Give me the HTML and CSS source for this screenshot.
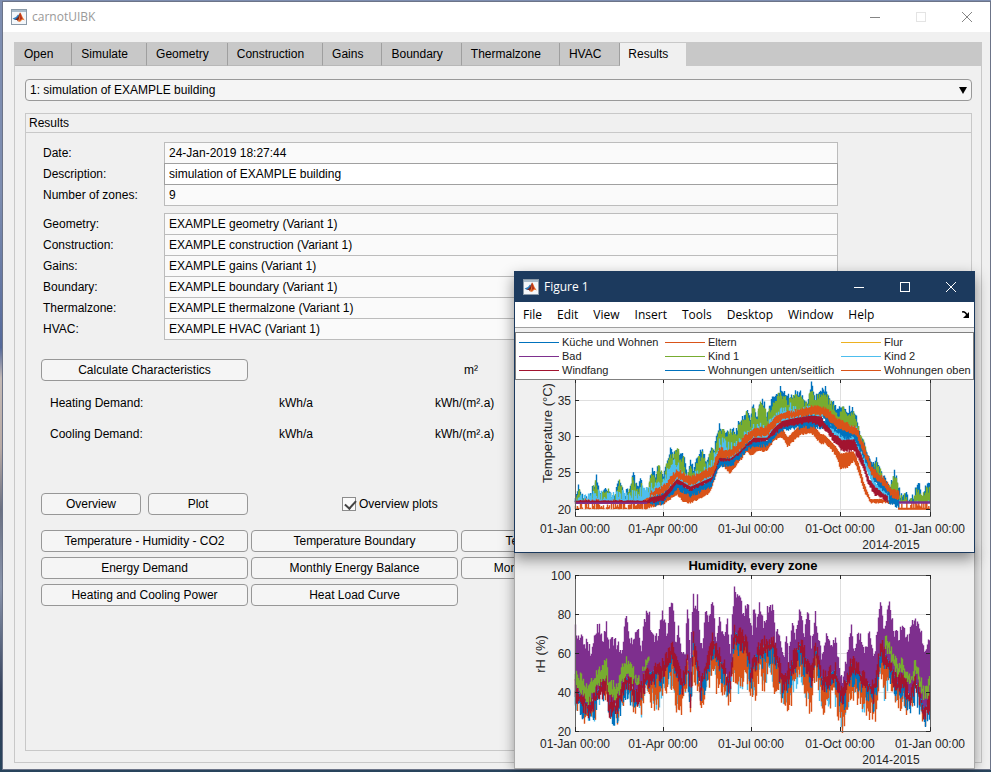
FILE: index.html
```html
<!DOCTYPE html>
<html lang="en">
<head>
<meta charset="utf-8">
<title>carnotUIBK</title>
<link rel="stylesheet" href="styles.css">
</head>
<body>
<svg class="defs" aria-hidden="true">
  <symbol id="app-icon" viewBox="0 0 16 16">
    <rect x=".5" y=".5" width="15" height="15" fill="#f4f7fa" stroke="#8b9aa8"/>
    <rect x="1" y="1" width="14" height="2" fill="#a9bccb"/>
    <path d="M1.500 9.500 5 8 7 5.500 8 6 6.500 10.500 4 11Z" fill="#2f7fc0"/>
    <path d="M4 11 7 8 9 3.500 9.500 7 7 12.500 6 11Z" fill="#7a2318"/>
    <path d="M9 3.500C10.500 4.500 11.500 9 14 11.500 12 10.500 11 10.500 9.500 12.500 9 13 7.500 13 7 12 8.500 9.500 8.500 6 9 3.500Z" fill="#e8702a"/>
    <path d="M9 3.500C9.800 5 10.500 8 11.500 10 10 9.500 9 11 8.500 12 9.500 9 9 6 9 3.500Z" fill="#b5301c"/>
  </symbol>
  <symbol id="min" viewBox="0 0 12 12"><path d="M1 6.500H11" stroke="currentColor" fill="none"/></symbol>
  <symbol id="max" viewBox="0 0 12 12"><rect x="1.500" y="1.500" width="9" height="9" stroke="currentColor" fill="none"/></symbol>
  <symbol id="close" viewBox="0 0 12 12"><path d="M1 1 11 11M11 1 1 11" stroke="currentColor" fill="none"/></symbol>
</svg>

<main class="window">
  <header class="titlebar">
    <svg class="app-icon"><use href="#app-icon"/></svg>
    <h1 class="window-title">carnotUIBK</h1>
    <div class="controls">
      <button aria-label="Minimize"><svg><use href="#min"/></svg></button>
      <button aria-label="Maximize" disabled><svg><use href="#max"/></svg></button>
      <button aria-label="Close"><svg><use href="#close"/></svg></button>
    </div>
  </header>
  <div class="tabbox">
    <div class="tabs" role="tablist">
      <button role="tab">Open</button><button role="tab">Simulate</button><button role="tab">Geometry</button><button role="tab">Construction</button><button role="tab">Gains</button><button role="tab">Boundary</button><button role="tab">Thermalzone</button><button role="tab">HVAC</button><button role="tab" aria-selected="true">Results</button>
    </div>
    <div class="page">
      <div class="picker">
        <select aria-label="Simulation"><option>1: simulation of EXAMPLE building</option></select>
        <svg class="arrow" viewBox="0 0 8 7"><path d="M0 0H8L4 7Z"/></svg>
      </div>
      <section class="panel">
        <h2>Results</h2>
        <div class="panel-body">
          <div class="fields">
            <label for="date">Date:</label><input id="date" readonly value="24-Jan-2019 18:27:44">
            <label for="desc">Description:</label><input id="desc" class="editable" value="simulation of EXAMPLE building">
            <label for="zones">Number of zones:</label><input id="zones" readonly value="9">
          </div>
          <div class="fields">
            <label for="geo">Geometry:</label><input id="geo" readonly value="EXAMPLE geometry (Variant 1)">
            <label for="con">Construction:</label><input id="con" readonly value="EXAMPLE construction (Variant 1)">
            <label for="gai">Gains:</label><input id="gai" readonly value="EXAMPLE gains (Variant 1)">
            <label for="bou">Boundary:</label><input id="bou" readonly value="EXAMPLE boundary (Variant 1)">
            <label for="the">Thermalzone:</label><input id="the" readonly value="EXAMPLE thermalzone (Variant 1)">
            <label for="hva">HVAC:</label><input id="hva" readonly value="EXAMPLE HVAC (Variant 1)">
          </div>
          <div class="demand">
            <button class="btn">Calculate Characteristics</button><span></span><span class="area">m²</span>
            <span class="name">Heating Demand:</span><span class="unit">kWh/a</span><span>kWh/(m².a)</span>
            <span class="name">Cooling Demand:</span><span class="unit">kWh/a</span><span>kWh/(m².a)</span>
          </div>
          <div class="overview">
            <button class="btn">Overview</button>
            <button class="btn">Plot</button>
            <label class="check"><input type="checkbox" checked>Overview plots</label>
          </div>
          <div class="plots">
            <button class="btn">Temperature - Humidity - CO2</button>
            <button class="btn">Temperature Boundary</button>
            <button class="btn">Temperature Surfaces</button>
            <button class="btn">Energy Demand</button>
            <button class="btn">Monthly Energy Balance</button>
            <button class="btn">Monthly Losses and Gains</button>
            <button class="btn">Heating and Cooling Power</button>
            <button class="btn">Heat Load Curve</button>
          </div>
        </div>
      </section>
    </div>
  </div>
</main>

<section class="figure figure-back" aria-label="Humidity figure">
  <svg class="chart" viewBox="0 0 459 215" id="humidity"></svg>
</section>

<section class="figure figure-front" aria-label="Figure 1">
  <header class="titlebar">
    <svg class="app-icon"><use href="#app-icon"/></svg>
    <h2 class="window-title">Figure 1</h2>
    <div class="controls">
      <button aria-label="Minimize"><svg><use href="#min"/></svg></button>
      <button aria-label="Maximize"><svg><use href="#max"/></svg></button>
      <button aria-label="Close"><svg><use href="#close"/></svg></button>
    </div>
  </header>
  <nav class="menu">
    <button>File</button><button>Edit</button><button>View</button><button>Insert</button><button>Tools</button><button>Desktop</button><button>Window</button><button>Help</button>
    <svg class="dock" viewBox="0 0 8 8"><path d="M0 1C3 0 4 2 5 4" fill="none" stroke="#000" stroke-width="1.500"/><path d="M7 1V7H1Z"/></svg>
  </nav>
  <ul class="legend">
    <li class="blue">Küche und Wohnen</li><li class="orange">Eltern</li><li class="yellow">Flur</li>
    <li class="purple">Bad</li><li class="green">Kind 1</li><li class="cyan">Kind 2</li>
    <li class="red">Windfang</li><li class="blue">Wohnungen unten/seitlich</li><li class="orange">Wohnungen oben</li>
  </ul>
  <svg class="chart" viewBox="0 0 459 172" id="temperature"></svg>
</section>
<script src="charts.js"></script>
</body>
</html>
```

FILE: styles.css
```css
* { box-sizing: border-box; }
body {
  margin: 0;
  height: 100vh;
  overflow: hidden;
  padding: 1px 0 2px 2px;
  background: linear-gradient(#7d8db0 0 25%, #54699a 45%, #c4bab6 49%, #b9aba6 58%, #6b7183 66%, #8994ab 76%, #33405a 90%, #28445c);
  font: 12px/14px "Liberation Sans", Arial, sans-serif;
  color: #000;
}
button, input, select { font: inherit; color: inherit; }
h1, h2, ul { margin: 0; padding: 0; font: inherit; }
.defs { position: absolute; width: 0; height: 0; }

.window {
  display: flex;
  flex-direction: column;
  height: 100%;
  background: #f0f0f0;
  border: 1px solid #6c7488;
}
.titlebar {
  display: flex;
  align-items: center;
  gap: 5px;
  height: 30px;
  padding-left: 8px;
  background: #fff;
  font-family: "Open Sans", "Noto Sans", sans-serif;
}
.app-icon { width: 16px; height: 16px; }
.window > .titlebar .window-title { color: #999; }
.controls { display: flex; margin-left: auto; }
.controls button {
  display: grid;
  place-items: center;
  width: 46px;
  height: 30px;
  padding: 0;
  border: 0;
  background: none;
  color: #858585;
}
.controls button:disabled { color: #e4e4e4; }
.controls svg { width: 12px; height: 12px; }

.tabbox {
  display: flex;
  flex-direction: column;
  flex: 1;
  margin: 10px 8px 6px 11px;
  border: 1px solid #c8c8c8;
}
.tabs { display: flex; height: 23px; background: #c8c8c8; }
.tabs button {
  padding: 0 18px 0 9px;
  border: 0;
  border-right: 1px solid #9f9f9f;
  border-bottom: 1px solid #b8b8b8;
  background: none;
}
.tabs [aria-selected="true"] { padding: 0 17px 0 8px; background: #f0f0f0; border-color: #f0f0f0; }
.page {
  display: flex;
  flex-direction: column;
  flex: 1;
  gap: 12px;
  padding: 13px 9px 11px 10px;
}
.picker { position: relative; display: flex; }
.picker select {
  appearance: none;
  width: 100%;
  height: 22px;
  padding: 0 4px;
  border: 1px solid #999;
  border-radius: 4px;
  background: #f5f5f5;
}
.arrow { position: absolute; right: 5px; top: 8px; width: 8px; height: 7px; }
.panel { flex: 1; border: 1px solid #c8c8c8; }
.panel h2 { height: 19px; padding: 2px 3px; border-bottom: 1px solid #c8c8c8; }
.panel-body { padding: 9px 15px; }
.fields {
  display: grid;
  grid-template-columns: 121px minmax(0, 674px);
  grid-auto-rows: 21px;
  align-items: center;
  margin: 0 0 8px 2px;
}
.fields input {
  width: 100%;
  height: 22px;
  margin: 0;
  padding: 0 4px;
  border: 1px solid #bcbcbc;
  border-radius: 0;
  background: #fafafa;
}
.fields .editable { position: relative; border-color: #a0a0a0; background: #fff; }
.btn {
  height: 22px;
  padding: 0;
  border: 1px solid #979797;
  border-radius: 4px;
  background: #f5f5f5;
}
.demand {
  display: grid;
  grid-template-columns: 207px 125px 100px;
  column-gap: 31px;
  grid-template-rows: 22px 43px 20px;
  align-items: center;
  padding-top: 12px;
}
.demand .name { padding-left: 9px; }
.demand .area { padding-left: 29px; }
.overview {
  display: grid;
  grid-template-columns: 100px 100px 1fr;
  gap: 7px;
  margin-top: 49px;
}
.check { display: flex; align-items: center; gap: 3px; padding-left: 87px; }
.check input {
  appearance: none;
  width: 14px;
  height: 14px;
  margin: 0;
  border: 1px solid #8c8c8c;
  background: #fafafa;
}
.check input:checked::after {
  content: "";
  display: block;
  width: 5px;
  height: 9px;
  margin: 0 0 0 4px;
  border: solid #444;
  border-width: 0 2px 2px 0;
  transform: rotate(42deg);
}
.plots {
  display: grid;
  grid-template-columns: repeat(3, 207px);
  gap: 5px 3px;
  margin-top: 15px;
}

.figure { position: absolute; left: 514px; width: 461px; border: 1px solid #1c3a5e; background: #f0f0f0; }
.figure-front { top: 271px; box-shadow: 0 6px 14px rgba(0, 0, 0, .45); }
.figure-back { top: 552px; border-color: #aaa; box-shadow: 0 0 12px rgba(0, 0, 0, .4); }
.figure .titlebar { background: #1c3a5e; color: #fff; }
.figure .controls button { color: #fff; }
.menu {
  display: flex;
  align-items: center;
  gap: 15px;
  height: 26px;
  padding: 0 4px 0 8px;
  border-bottom: 1px solid #a0a0a0;
  background: #fff;
  font-family: "Open Sans", "Noto Sans", sans-serif;
}
.menu button { padding: 0; border: 0; background: none; }
.dock { width: 8px; height: 8px; margin-left: auto; }
.legend {
  display: grid;
  grid-template-columns: 146px 176px 1fr;
  grid-auto-rows: 14px;
  margin-top: 4px;
  padding: 2px 0 2px 3px;
  border: 1px solid #808080;
  background: #fff;
  font-size: 11px;
  list-style: none;
}
.legend li { display: flex; align-items: center; gap: 3px; white-space: nowrap; color: #222; }
.legend li::before { content: ""; width: 40px; height: 1px; background: currentColor; }
.legend .blue::before { background: #0072bd; }
.legend .orange::before { background: #d95319; }
.legend .yellow::before { background: #edb120; }
.legend .purple::before { background: #7e2f8e; }
.legend .green::before { background: #77ac30; }
.legend .cyan::before { background: #4dbeee; }
.legend .red::before { background: #a2142f; }
.chart { display: block; width: 100%; font-size: 12px; fill: #262626; }
.axis-name { font-size: 13px; }
.chart-title { font-size: 13px; font-weight: bold; fill: #000; }
```

FILE: charts.js
```js
const C = { blue: '#0072bd', orange: '#d95319', purple: '#7e2f8e', green: '#77ac30', cyan: '#4dbeee', red: '#a2142f' };
const LEFT = 60, RIGHT = 415;
let seed = 7;
const rand = () => (seed = (seed * 16807) % 2147483647) / 2147483647;

// Series are lists of "x,y" knots on a grid of three units per pixel.
const knots = s => s.trim().split(/\s+/).map(p => p.split(',').map(Number));
const moved = (s, n) => s.replace(/,(\d+)/g, (m, y) => ',' + (+y + n));
function at(k, x) {
  if (x <= k[0][0]) return k[0][1];
  for (let i = 1; i < k.length; i++) {
    if (x <= k[i][0]) {
      const [x0, y0] = k[i - 1], [x1, y1] = k[i];
      return y0 + (y1 - y0) * (x - x0) / (x1 - x0);
    }
  }
  return k[k.length - 1][1];
}
function band(color, top, bottom, jt, jb, oy, from = 0, to = 1062) {
  const a = knots(top), b = knots(bottom);
  let d = '';
  for (let x = Math.max(from, 0); x <= to; x += 3) {
    const y0 = (at(a, x) + rand() * jt) / 3 - oy;
    const y1 = (at(b, x) - rand() * jb) / 3 - oy;
    if (y1 > y0) d += `M${LEFT + x / 3 + 0.5} ${y0.toFixed(1)}V${y1.toFixed(1)}`;
  }
  return `<path d="${d}" stroke="${color}" stroke-width="1.4" fill="none"/>`;
}
const X_TICKS = [[60, '01-Jan 00:00'], [148, '01-Apr 00:00'], [236, '01-Jul 00:00'], [325, '01-Oct 00:00'], [415, '01-Jan 00:00']];

function frame(o, data) {
  let s = `<rect x="${LEFT}" y="${o.top}" width="355" height="${o.bottom - o.top}" fill="#fff"/>`;
  for (const [x] of X_TICKS) s += `<path d="M${x + .5} ${o.top}V${o.bottom}" stroke="#dfdfdf"/>`;
  for (const [y] of o.y) s += `<path d="M${LEFT} ${y + .5}H${RIGHT}" stroke="#dfdfdf"/>`;
  s += data;
  s += `<rect x="${LEFT + .5}" y="${o.top + .5}" width="355" height="${o.bottom - o.top}" fill="none" stroke="#666"/>`;
  for (const [x, t] of X_TICKS) {
    s += `<path d="M${x + .5} ${o.bottom}v-4M${x + .5} ${o.top}v4" stroke="#262626"/>`;
    s += `<text x="${x}" y="${o.bottom + 17}" text-anchor="middle">${t}</text>`;
  }
  for (const [y, t] of o.y) {
    s += `<path d="M${LEFT} ${y + .5}h4M${RIGHT} ${y + .5}h-4" stroke="#262626"/>`;
    s += `<text x="56" y="${y + 5}" text-anchor="end">${t}</text>`;
  }
  s += `<text x="376" y="${o.bottom + 33}" text-anchor="middle">2014-2015</text>`;
  s += `<text class="axis-name" text-anchor="middle" transform="translate(${o.nameX} ${o.nameY}) rotate(-90)">${o.name}</text>`;
  if (o.title) s += `<text class="chart-title" x="238" y="17" text-anchor="middle">${o.title}</text>`;
  return s;
}

const peak = `0,370 8,318 20,345 30,365 45,345 63,297 75,345 97,325 115,360 133,300 145,350 160,335 173,285 185,330 195,305 210,350 233,265 240,290 250,255 263,290 285,210 295,235 305,195 315,235 325,230 335,290 347,245 355,280 365,235 383,215 395,250 408,200 415,215 430,138 445,150 460,160 467,150 480,165 490,130 513,98 525,120
 532,65 545,110 553,65 565,70 575,110 595,50 617,30 635,60 645,50 675,40 695,70 707,15 720,55 735,35 750,25 760,60 775,75 785,100 800,80 815,90 835,90 845,120 855,165 865,185 880,240 890,265 903,245 915,270 935,320 947,320 955,275 965,300 975,350 990,340 1000,365 1015,350 1028,310 1040,350 1050,325 1065,320`;
const cyanTop = `0,362 65,342 165,345 225,322 263,300 290,245 305,250 335,300 410,250 432,182 475,205 513,158 535,143 575,143 620,80 707,88 745,98 795,130 845,155 880,260 900,300 950,350 975,374 1065,374`;
const warmTop = `0,378 210,378 225,345 263,330 305,278 345,302 410,272 432,215 465,220 495,195 513,172 535,157 575,150 595,124 620,108 655,103 707,90 745,90 785,125 845,155 865,205 890,272 925,305 950,340 970,345 975,378 1065,378`;
const warmEnd = `0,381 210,381 225,368 263,360 305,312 345,335 410,307 432,249 465,251 495,228 513,210 535,188 575,188 595,160 620,138 655,130 707,122 745,125 785,162 845,188 865,240 890,308 925,335 950,370 970,378 975,381 1065,381`;
const redEnd = `0,386 210,386 225,386 263,380 305,328 345,350 410,318 432,260 465,260 495,238 513,215 535,205 575,200 620,160 707,145 745,162 775,205 805,235 835,230 860,275 880,335 900,366 935,383 975,385 1065,386`;
const coldTop = `225,365 263,350 305,315 345,338 410,305 432,245 475,245 513,200 535,190 575,190 620,140 707,115 745,130 795,165 835,170 860,230 880,265 935,345 970,370`;
const coldEnd = `225,398 263,390 305,346 345,370 410,338 432,280 475,272 513,232 535,222 575,216 620,172 707,160 745,164 795,195 835,205 860,240 880,290 935,385 970,404`;
const lowTop = `210,370 225,365 263,360 305,335 325,345 345,348 375,335 400,325 410,300 432,240 445,240 463,268 480,250 513,200 545,202 575,198 595,170 620,158 637,185 675,148 707,142 735,175 750,180 780,213 795,235 835,228 850,265 865,322 885,370 965,372 970,392 1065,394`;
const lowEnd = `210,405 225,400 263,390 305,362 325,384 345,388 375,372 400,360 410,338 432,274 445,278 463,298 480,280 513,234 525,244 545,234 575,230 595,200 620,190 637,218 675,182 707,176 735,208 750,208 780,242 795,284 815,282 835,260 850,296 865,350 885,386 965,388 970,404 1065,404`;
const T = 380 - 375;
const layers = [
  ['blue', peak, warmEnd, 24, 0],
  ['green', moved(peak, 10), warmEnd, 26, 0],
  ['cyan', cyanTop, warmEnd, 34, 0],
  ['orange', lowTop, lowEnd, 3, 6, 210, 967],
  ['orange', '0,370 1065,370', '0,403 1065,403', 34, 2, 0, 210],
  ['orange', '0,375 1065,375', '0,403 1065,403', 40, 0, 970],
  ['orange', '0,398 1065,398', '0,404 1065,404', 0, 0, 970],
  ['blue', coldTop, coldEnd, 9, 12, 225, 970],
  ['cyan', '760,150 805,180 835,180 870,250 900,320 940,360', '760,178 805,210 835,208 870,280 900,355 940,382', 8, 8, 765, 940],
  ['blue', '745,110 805,150 835,160 870,220 900,285 950,350', '745,140 805,195 835,195 870,262 900,328 950,380', 8, 14, 745, 945],
  ['red', warmEnd, redEnd, 0, 6, 210, 740],
  ['red', '740,132 775,175 805,195 835,190 860,245 880,310 900,335 935,362', redEnd, 5, 9, 740, 935],
  ['purple', '0,379 1065,379', '0,387 1065,387', 0, 0, 0, 215],
  ['purple', '0,379 1065,379', '0,386 1065,386', 0, 0, 972],
  ['red', '0,375 1065,375', '0,382 1065,382', 3, 0, 0, 215],
  ['orange', warmTop, warmEnd, 10, 8, 225, 970]
];
document.getElementById('temperature').innerHTML = frame({
  top: -1, bottom: 136, y: [[20, '35'], [56, '30'], [92, '25'], [129, '20']],
  name: 'Temperature (°C)', nameX: 37, nameY: 53
}, layers.map(([c, a, b, jt, jb, from, to]) => band(C[c], a, b, jt, jb, T, from, to)).join(''));

const bathTop = `0,212 8,228 25,250 40,262 47,295 60,215 73,200 83,245 93,195 101,275 110,235 125,262 140,268 151,165 163,240 175,250 187,200 197,290 205,190 220,150 227,225 245,240 257,172 267,170 275,230 281,160 292,138 301,255 310,205 320,280 330,280 336,135 345,290 354,118 362,150 367,110 375,250 382,265 391,130 400,190 413,103 420,245 433,182 443,240 455,180 465,270 477,90 485,120 493,105 505,170 515,135 525,180
 530,235 535,135 543,200 552,130 565,195 577,150 592,145 600,235 610,215 625,300 632,235 640,300 651,175 660,240 674,130 685,240 699,150 708,265 720,165 730,245 740,305 753,220 760,260 779,235 795,340 800,360 815,300 827,190 835,280 845,240 857,230 870,280 883,215 895,300 907,210 917,125 925,225 943,130 955,215 970,240 983,185 995,245 1015,185 1035,210 1047,290 1060,230 1065,225`;
const redTop = `0,375 40,430 60,390 93,350 101,420 125,420 151,340 185,390 220,330 263,310 292,260 320,360 336,285 345,390 354,220 375,370 413,230 435,290 465,360 477,205 515,240 525,320 552,250 592,240 625,360 674,240 708,330 720,250 740,350 779,320 800,400 827,300 895,380 917,250 943,300 965,360 983,350 1005,400 1020,350 1047,440 1065,400`;
const rhEnd = `0,480 12,495 40,525 55,515 75,450 93,440 101,515 133,510 151,440 180,480 197,510 210,440 230,470 255,470 270,420 292,415 303,490 325,480 336,400 346,510 354,380 380,475 391,450 413,350 425,440 445,450 465,465 477,360 485,430 510,400 525,430
 542,440 552,370 567,440 577,360 600,430 640,490 674,370 690,450 708,490 720,380 740,490 779,460 800,540 827,450 875,490 900,515 917,370 927,465 943,390 960,455 980,475 1005,490 1020,420 1047,530 1065,460`;
const rh = [
  ['purple', bathTop, moved(redTop, 30), 36, 0],
  ['cyan', moved(redTop, 50), rhEnd, 0, 110],
  ['orange', moved(redTop, 40), moved(rhEnd, 6), 0, 75],
  ['blue', moved(redTop, 30), moved(redTop, 100), 0, 70],
  ['red', redTop, moved(redTop, 75), 40, 40],
  ['green', moved(redTop, -40), moved(redTop, 28), 30, 25, 0, 175],
  ['green', moved(redTop, -30), moved(redTop, 12), 35, 20, 175, 225],
  ['green', moved(redTop, -40), moved(redTop, 18), 32, 28, 930]
];
document.getElementById('humidity').innerHTML = frame({
  top: 22, bottom: 178, y: [[22, '100'], [61, '80'], [100, '60'], [139, '40'], [178, '20']],
  name: 'rH (%)', nameX: 30, nameY: 101, title: 'Humidity, every zone'
}, rh.map(([c, a, b, jt, jb, from, to]) => band(C[c], a, b, jt, jb, 0, from, to)).join(''));
```
